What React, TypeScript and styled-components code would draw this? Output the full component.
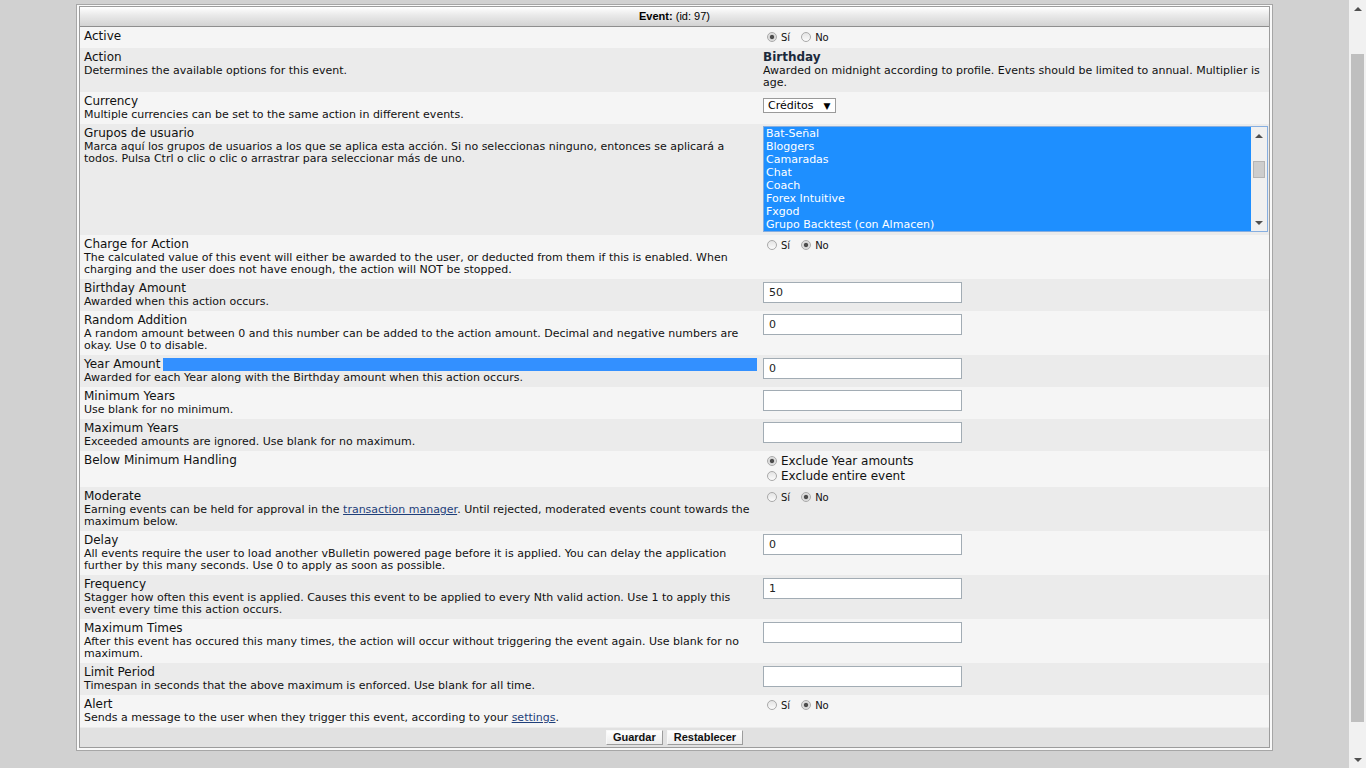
import React from 'react';
import styled, { createGlobalStyle } from 'styled-components';

const GlobalStyle = createGlobalStyle`
  html, body {
    margin: 0;
    padding: 0;
    height: 100%;
    overflow: hidden;
    background: #d1d1d1;
    font-family: "DejaVu Sans", Verdana, sans-serif;
    color: #000;
  }
`;

// page = content area + the browser scrollbar strip on the right
const Page = styled.div`
  display: flex;
  height: 100vh;
`;

const Main = styled.div`
  flex: 1;
  display: flex;
  justify-content: center;
  align-items: flex-start;
  padding-top: 4px;
  overflow: hidden;
`;

const Panel = styled.div`
  width: 1197px;
  box-sizing: border-box;
  border: 1px solid #a6a6a6;
  background: #f9f9f9;
  padding: 1px 2px 2px;
`;

const Table = styled.div`
  border: 1px solid #9c9c9c;
  background: #f5f5f5;
`;

const Header = styled.div`
  height: 19px;
  line-height: 19px;
  text-align: center;
  font-family: "Liberation Sans", Arial, sans-serif;
  font-size: 11px;
  background: linear-gradient(#ffffff, #e9e9e9 45%, #d3d3d3);
  border-bottom: 1px solid #8e8e8e;

  b {
    font-weight: bold;
  }
`;

const Row = styled.div<{ $alt?: boolean }>`
  display: grid;
  grid-template-columns: 678px 1fr;
  background: ${({ $alt }) => ($alt ? '#ebebeb' : '#f5f5f5')};
`;

const LabelCell = styled.div`
  padding: 2px 4px 3px 4px;
`;

const ValueCell = styled.div`
  padding: 2px 3px 3px 5px;
`;

const Title = styled.div`
  display: flex;
  font-size: 12px;
  line-height: 15px;
  color: #111;
`;

const Selection = styled.span`
  flex: 1;
  height: 13px;
  margin: 1px -3px 0 3px;
  background: #3390ff;
`;

const Desc = styled.div`
  font-size: 11px;
  line-height: 12px;
  color: #111;

  a {
    color: #1f3f7a;
    text-decoration: underline;
  }
`;

const ActionName = styled.div`
  font-size: 12px;
  font-weight: bold;
  line-height: 15px;
  color: #1b2a3c;
`;

const RadioLine = styled.div<{ $big?: boolean }>`
  display: flex;
  align-items: center;
  height: ${({ $big }) => ($big ? '15.5px' : '16px')};
  font-size: ${({ $big }) => ($big ? '12px' : '10px')};
  color: #111;
`;

const RadioOption = styled.label`
  display: inline-flex;
  align-items: center;
  gap: 4px;
  margin-right: 7px;
`;

const Radio = styled.span<{ $checked?: boolean }>`
  display: inline-block;
  width: 10px;
  height: 10px;
  box-sizing: border-box;
  margin-left: 4px;
  border-radius: 50%;
  border: 1px solid #a9a9a9;
  background: ${({ $checked }) =>
    $checked
      ? 'radial-gradient(circle, #4d4d4d 0, #4d4d4d 1.7px, #d8d8d8 2.6px, #ececec 100%)'
      : 'linear-gradient(#e4e4e4, #fbfbfb)'};
`;

const DropDown = styled.div`
  display: inline-flex;
  align-items: center;
  justify-content: space-between;
  gap: 10px;
  margin-top: 2px;
  width: 73px;
  height: 15px;
  box-sizing: border-box;
  padding: 0 5px 0 4px;
  border: 1px solid #9a9a9a;
  background: #fff;
  font-size: 11px;

  span {
    font-size: 9px;
  }
`;

const ListBox = styled.div`
  display: flex;
  width: 505px;
  height: 106px;
  box-sizing: border-box;
  border: 1px solid #86aee0;
  background: #1e8fff;
`;

const ListItems = styled.div`
  flex: 1;
  padding: 0 2px;
  overflow: hidden;
`;

const ListItem = styled.div`
  font-size: 11px;
  line-height: 13px;
  color: #fff;
  white-space: nowrap;
`;

const ListScroll = styled.div`
  width: 16px;
  display: flex;
  flex-direction: column;
  align-items: center;
  background: #f0f0f0;
`;

const ArrowBox = styled.div`
  height: 17px;
  width: 100%;
  display: flex;
  align-items: center;
  justify-content: center;
`;

const Triangle = styled.span<{ $down?: boolean }>`
  width: 0;
  height: 0;
  border-left: 4px solid transparent;
  border-right: 4px solid transparent;
  ${({ $down }) =>
    $down ? 'border-top: 4px solid #505050;' : 'border-bottom: 4px solid #505050;'}
`;

const Track = styled.div`
  flex: 1;
  width: 100%;
  display: flex;
  justify-content: center;
`;

const ListThumb = styled.div`
  width: 12px;
  height: 17px;
  margin-top: 17px;
  box-sizing: border-box;
  background: #cdcdcd;
  border: 1px solid #b4b4b4;
`;

const TextBox = styled.input`
  width: 199px;
  height: 21px;
  box-sizing: border-box;
  margin: 0;
  padding: 0 5px;
  border: 1px solid #a2acb4;
  background: #fff;
  font-family: "DejaVu Sans", Verdana, sans-serif;
  font-size: 11px;
  color: #222;
  outline: none;
`;

const Footer = styled.div`
  display: flex;
  justify-content: center;
  gap: 4px;
  padding: 2px 0 2px;
  background: #e1e1e1;
  border-top: 1px solid #ececec;
`;

const Button = styled.button`
  height: 15px;
  padding: 0 6px;
  margin: 0;
  font-family: "Liberation Sans", Arial, sans-serif;
  font-size: 11px;
  font-weight: bold;
  line-height: 13px;
  color: #111;
  background: linear-gradient(#ffffff, #ececec);
  border: 1px solid;
  border-color: #f8f8f8 #9c9c9c #9c9c9c #f8f8f8;
  cursor: pointer;
`;

// browser scrollbar strip
const PageScroll = styled.div`
  width: 17px;
  display: flex;
  flex-direction: column;
  align-items: center;
  background: #f1f1f1;
`;

const PageTrack = styled.div`
  flex: 1;
  width: 100%;
  display: flex;
  justify-content: center;
`;

const PageThumb = styled.div`
  width: 13px;
  height: 668px;
  margin-top: 37px;
  background: #bfbfbf;
`;

const Radios = ({ yes }: { yes: boolean }) => (
  <RadioLine>
    <RadioOption>
      <Radio $checked={yes} /> Sí
    </RadioOption>
    <RadioOption>
      <Radio $checked={!yes} /> No
    </RadioOption>
  </RadioLine>
);

const groups = [
  'Bat-Señal',
  'Bloggers',
  'Camaradas',
  'Chat',
  'Coach',
  'Forex Intuitive',
  'Fxgod',
  'Grupo Backtest (con Almacen)',
];

type Field = {
  title: string;
  desc?: React.ReactNode;
  value: React.ReactNode;
  selected?: boolean;
};

const fields: Field[] = [
  { title: 'Active', value: <Radios yes /> },
  {
    title: 'Action',
    desc: 'Determines the available options for this event.',
    value: (
      <>
        <ActionName>Birthday</ActionName>
        <Desc>
          Awarded on midnight according to profile. Events should be limited to annual. Multiplier is
          age.
        </Desc>
      </>
    ),
  },
  {
    title: 'Currency',
    desc: 'Multiple currencies can be set to the same action in different events.',
    value: (
      <DropDown>
        Créditos <span>▼</span>
      </DropDown>
    ),
  },
  {
    title: 'Grupos de usuario',
    desc:
      'Marca aquí los grupos de usuarios a los que se aplica esta acción. Si no seleccionas ninguno, entonces se aplicará a todos. Pulsa Ctrl o clic o clic o arrastrar para seleccionar más de uno.',
    value: (
      <ListBox>
        <ListItems>
          {groups.map((g) => (
            <ListItem key={g}>{g}</ListItem>
          ))}
        </ListItems>
        <ListScroll>
          <ArrowBox>
            <Triangle />
          </ArrowBox>
          <Track>
            <ListThumb />
          </Track>
          <ArrowBox>
            <Triangle $down />
          </ArrowBox>
        </ListScroll>
      </ListBox>
    ),
  },
  {
    title: 'Charge for Action',
    desc:
      'The calculated value of this event will either be awarded to the user, or deducted from them if this is enabled. When charging and the user does not have enough, the action will NOT be stopped.',
    value: <Radios yes={false} />,
  },
  {
    title: 'Birthday Amount',
    desc: 'Awarded when this action occurs.',
    value: <TextBox readOnly value="50" />,
  },
  {
    title: 'Random Addition',
    desc:
      'A random amount between 0 and this number can be added to the action amount. Decimal and negative numbers are okay. Use 0 to disable.',
    value: <TextBox readOnly value="0" />,
  },
  {
    title: 'Year Amount',
    selected: true,
    desc: 'Awarded for each Year along with the Birthday amount when this action occurs.',
    value: <TextBox readOnly value="0" />,
  },
  {
    title: 'Minimum Years',
    desc: 'Use blank for no minimum.',
    value: <TextBox readOnly value="" />,
  },
  {
    title: 'Maximum Years',
    desc: 'Exceeded amounts are ignored. Use blank for no maximum.',
    value: <TextBox readOnly value="" />,
  },
  {
    title: 'Below Minimum Handling',
    value: (
      <>
        <RadioLine $big>
          <RadioOption>
            <Radio $checked /> Exclude Year amounts
          </RadioOption>
        </RadioLine>
        <RadioLine $big>
          <RadioOption>
            <Radio /> Exclude entire event
          </RadioOption>
        </RadioLine>
      </>
    ),
  },
  {
    title: 'Moderate',
    desc: (
      <>
        Earning events can be held for approval in the <a>transaction manager</a>. Until rejected,
        moderated events count towards the maximum below.
      </>
    ),
    value: <Radios yes={false} />,
  },
  {
    title: 'Delay',
    desc:
      'All events require the user to load another vBulletin powered page before it is applied. You can delay the application further by this many seconds. Use 0 to apply as soon as possible.',
    value: <TextBox readOnly value="0" />,
  },
  {
    title: 'Frequency',
    desc:
      'Stagger how often this event is applied. Causes this event to be applied to every Nth valid action. Use 1 to apply this event every time this action occurs.',
    value: <TextBox readOnly value="1" />,
  },
  {
    title: 'Maximum Times',
    desc:
      'After this event has occured this many times, the action will occur without triggering the event again. Use blank for no maximum.',
    value: <TextBox readOnly value="" />,
  },
  {
    title: 'Limit Period',
    desc: 'Timespan in seconds that the above maximum is enforced. Use blank for all time.',
    value: <TextBox readOnly value="" />,
  },
  {
    title: 'Alert',
    desc: (
      <>
        Sends a message to the user when they trigger this event, according to your <a>settings</a>.
      </>
    ),
    value: <Radios yes={false} />,
  },
];

const App: React.FC = () => {
  return (
    <Page>
      <GlobalStyle />
      <Main>
        <Panel>
          <Table>
            <Header>
              <b>Event:</b> (id: 97)
            </Header>
            {fields.map((f, i) => (
              <Row key={f.title} $alt={i % 2 === 1}>
                <LabelCell>
                  <Title>
                    {f.title}
                    {f.selected && <Selection />}
                  </Title>
                  {f.desc && <Desc>{f.desc}</Desc>}
                </LabelCell>
                <ValueCell>{f.value}</ValueCell>
              </Row>
            ))}
            <Footer>
              <Button>Guardar</Button>
              <Button>Restablecer</Button>
            </Footer>
          </Table>
        </Panel>
      </Main>
      <PageScroll>
        <ArrowBox>
          <Triangle />
        </ArrowBox>
        <PageTrack>
          <PageThumb />
        </PageTrack>
        <ArrowBox>
          <Triangle $down />
        </ArrowBox>
      </PageScroll>
    </Page>
  );
};

export default App;
